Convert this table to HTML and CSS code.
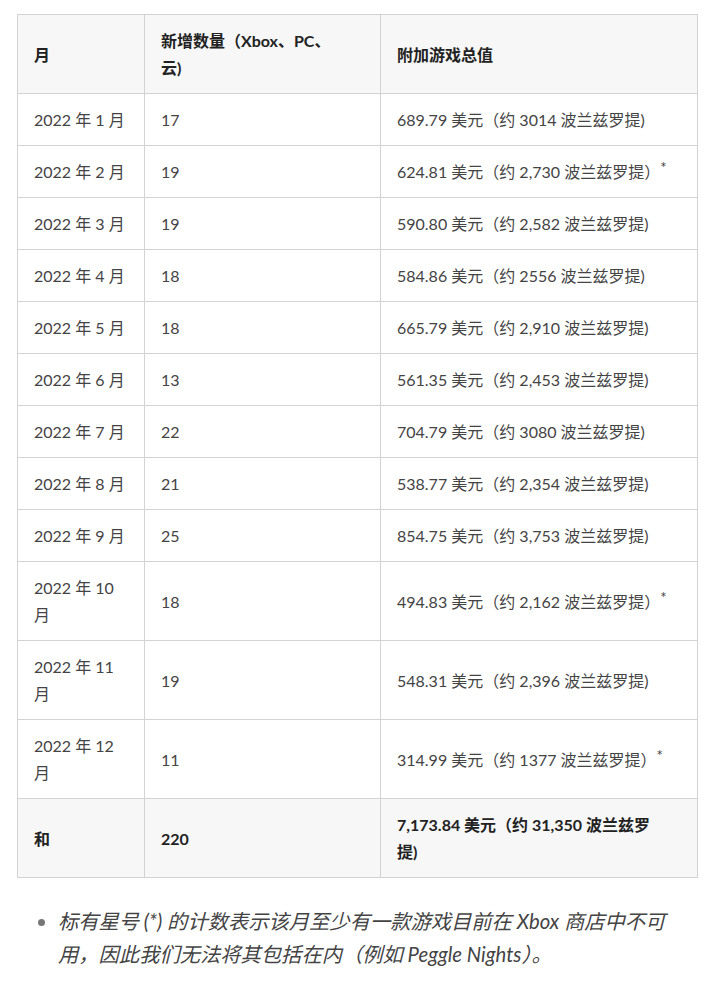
FILE: index.html
```html
<!DOCTYPE html>
<html lang="zh-CN">
<head>
<meta charset="utf-8">
<title>表格</title>
<link rel="stylesheet" href="styles.css">
</head>
<body>
<div class="page">
<table class="data">
  <colgroup><col class="c1"><col class="c2"><col class="c3"></colgroup>
  <thead>
    <tr><th>月</th><th>新增数量（Xbox、PC、<br>云)</th><th>附加游戏总值</th></tr>
  </thead>
  <tbody>
    <tr><td>2022 年 1 月</td><td>17</td><td>689.79 美元（约 3014 波兰兹罗提)</td></tr>
    <tr><td>2022 年 2 月</td><td>19</td><td>624.81 美元（约 2,730 波兰兹罗提）<sup>*</sup></td></tr>
    <tr><td>2022 年 3 月</td><td>19</td><td>590.80 美元（约 2,582 波兰兹罗提)</td></tr>
    <tr><td>2022 年 4 月</td><td>18</td><td>584.86 美元（约 2556 波兰兹罗提)</td></tr>
    <tr><td>2022 年 5 月</td><td>18</td><td>665.79 美元（约 2,910 波兰兹罗提)</td></tr>
    <tr><td>2022 年 6 月</td><td>13</td><td>561.35 美元（约 2,453 波兰兹罗提)</td></tr>
    <tr><td>2022 年 7 月</td><td>22</td><td>704.79 美元（约 3080 波兰兹罗提)</td></tr>
    <tr><td>2022 年 8 月</td><td>21</td><td>538.77 美元（约 2,354 波兰兹罗提)</td></tr>
    <tr><td>2022 年 9 月</td><td>25</td><td>854.75 美元（约 3,753 波兰兹罗提)</td></tr>
    <tr><td>2022 年 10 月</td><td>18</td><td>494.83 美元（约 2,162 波兰兹罗提）<sup>*</sup></td></tr>
    <tr><td>2022 年 11 月</td><td>19</td><td>548.31 美元（约 2,396 波兰兹罗提)</td></tr>
    <tr><td>2022 年 12 月</td><td>11</td><td>314.99 美元（约 1377 波兰兹罗提）<sup>*</sup></td></tr>
  </tbody>
  <tfoot>
    <tr><th>和</th><th>220</th><th>7,173.84 美元（约 31,350 波兰兹罗<br>提)</th></tr>
  </tfoot>
</table>
<ul class="notes">
  <li>标有星号 (*) 的计数表示该月至少有一款游戏目前在 Xbox 商店中不可用，因此我们无法将其包括在内（例如 Peggle Nights）。</li>
</ul>
</div>
</body>
</html>
```
FILE: styles.css
```css
html, body {
  margin: 0;
  padding: 0;
  background: #ffffff;
}
body {
  font-family: Lato, "Noto Sans CJK SC", sans-serif;
  color: #444444;
}
.page {
  padding: 14px 18px 0 17px;
}
.data {
  border-collapse: collapse;
  width: 680px;
  table-layout: fixed;
  font-size: 16px;
  line-height: 27px;
}
.data col.c1 { width: 127px; }
.data col.c2 { width: 236px; }
.data col.c3 { width: 317px; }
.data th,
.data td {
  border: 1px solid #d3d3d3;
  padding: 12px 16px;
  text-align: left;
  vertical-align: middle;
}
.data th {
  font-weight: 700;
  color: #222222;
}
.data thead tr,
.data tfoot tr {
  background: #f7f7f7;
}
.data sup {
  font-size: 15px;
  line-height: 0;
  vertical-align: 5px;
  margin-left: 0;
}
.notes {
  margin: 27px 0 0 0;
  padding: 0 12px 0 41px;
  font-size: 20.3px;
  line-height: 33px;
  font-style: italic;
  color: #444444;
}
.notes li::marker {
  color: #777777;
}
```
